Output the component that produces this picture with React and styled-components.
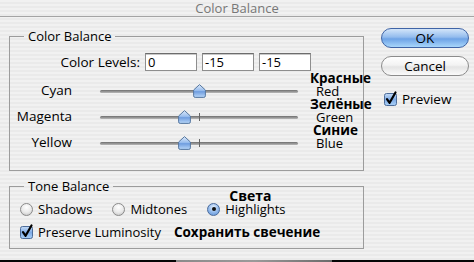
import React from "react";
import styled, { createGlobalStyle } from "styled-components";

const GlobalStyle = createGlobalStyle`
  html, body { margin: 0; padding: 0; }
  body { font-family: "Open Sans", "DejaVu Sans", sans-serif; }
`;

const Window = styled.div`
  width: 474px;
  height: 262px;
  overflow: hidden;
  display: flex;
  flex-direction: column;
  color: #000;
  font-size: 13px;
  background: repeating-linear-gradient(to bottom, #f1f1f1 0 2px, #eaeaea 2px 4px);
`;

const TitleBar = styled.div`
  height: 16px;
  flex: none;
  border-bottom: 1px solid #a4a4a4;
  text-align: center;
  line-height: 16px;
  font-size: 13px;
  color: #777;
`;

const Body = styled.div`
  flex: 1;
  display: flex;
  padding-left: 9px;
`;

const LeftColumn = styled.div`
  width: 355px;
  display: flex;
  flex-direction: column;
`;

const Group = styled.fieldset`
  margin: ${(p) => p.$top}px 0 0 0;
  padding: 0 0 ${(p) => p.$bottom}px 0;
  border: 1px solid #9c9c9c;
  min-width: 0;
`;

const Legend = styled.legend`
  margin-left: 14px;
  padding: 0 4px;
  line-height: 16px;
  font-size: 13px;
`;

const LevelsRow = styled.div`
  display: flex;
  align-items: center;
  gap: 5px;
  margin: 9px 0 1px 0;
`;

const LevelsLabel = styled.span`
  width: 130px;
  text-align: right;
  font-size: 13.5px;
`;

const LevelInput = styled.div`
  width: 48px;
  height: 16px;
  background: #fff;
  border: 1px solid #8e8e8e;
  border-top-color: #6c6c6c;
  box-shadow: inset 0 1px 0 #c8c8c8;
  line-height: 16px;
  padding-left: 2px;
  box-sizing: content-box;
  font-size: 13px;
`;

const SliderRow = styled.div`
  display: grid;
  grid-template-columns: 62px 226px auto;
  height: 26px;
  align-items: end;
`;

const SliderLabel = styled.span`
  text-align: right;
  line-height: 13px;
  margin-bottom: 1px;
  font-size: 13.5px;
`;

const TrackArea = styled.div`
  position: relative;
  height: 14px;
  margin-left: 28px;
  width: 198px;
`;

const Track = styled.div`
  position: absolute;
  left: 0;
  right: 0;
  top: 6px;
  height: 3px;
  border-radius: 2px;
  background: linear-gradient(to bottom, #6e6e6e, #b9b9b9);
`;

const Tick = styled.div`
  position: absolute;
  left: 99px;
  top: 3px;
  width: 1px;
  height: 8px;
  background: #666;
`;

const Thumb = styled.svg`
  position: absolute;
  top: 0;
  width: 13px;
  height: 14px;
  margin-left: -6px;
`;

const SideLabels = styled.div`
  display: flex;
  flex-direction: column;
  margin-left: 12px;
  white-space: nowrap;
`;

const RuLabel = styled.span`
  font-weight: 700;
  font-size: 13.5px;
  line-height: 13px;
  padding-left: ${(p) => p.$indent || 0}px;
`;

const EnLabel = styled.span`
  line-height: 13px;
  padding-left: 6px;
`;

const OptionRow = styled.div`
  display: flex;
  align-items: center;
  height: 16px;
  margin-top: 7px;
  padding-left: 10px;
  gap: ${(p) => p.$gap}px;
`;

const Option = styled.label`
  position: relative;
  display: flex;
  align-items: center;
  gap: 5px;
  white-space: nowrap;
`;

const Annotation = styled.span`
  position: absolute;
  left: 22px;
  bottom: 15px;
  font-weight: 700;
  font-size: 14px;
  line-height: 14px;
`;

const RuNote = styled.span`
  font-weight: 700;
  font-size: 13.5px;
  white-space: nowrap;
`;

const RadioDot = styled.span`
  width: 11px;
  height: 11px;
  border-radius: 50%;
  flex: none;
  display: flex;
  align-items: center;
  justify-content: center;
  border: 1px solid ${(p) => (p.$on ? "#4a6b9c" : "#8a8a8a")};
  background: ${(p) =>
    p.$on
      ? "radial-gradient(circle at 50% 30%, #e6f0fc 0%, #8fb7ea 55%, #5b8fd6 100%)"
      : "radial-gradient(circle at 50% 30%, #ffffff 0%, #e8e8e8 55%, #bdbdbd 100%)"};

  &::after {
    content: "";
    display: ${(p) => (p.$on ? "block" : "none")};
    width: 4px;
    height: 4px;
    border-radius: 50%;
    background: #111;
  }
`;

const RightColumn = styled.div`
  width: 88px;
  margin-left: 17px;
  margin-top: 11px;
  display: flex;
  flex-direction: column;
`;

const Button = styled.button`
  height: 20px;
  width: 88px;
  padding: 0;
  margin-bottom: 8px;
  border-radius: 10px;
  font-family: inherit;
  font-size: 13.5px;
  line-height: 18px;
  color: #000;
  border: 1px solid ${(p) => (p.$primary ? "#3f64a6" : "#8c8c8c")};
  background: ${(p) =>
    p.$primary
      ? "linear-gradient(to bottom, #d3e5f9 0%, #93bcee 45%, #6ea3e6 55%, #a8d6fb 100%)"
      : "linear-gradient(to bottom, #ffffff 0%, #f3f3f3 45%, #e4e4e4 55%, #fbfbfb 100%)"};
`;

const PreviewRow = styled.label`
  display: flex;
  align-items: center;
  gap: 5px;
  height: 16px;
  margin-top: 7px;
  padding-left: 3px;
  font-size: 13.5px;
`;

const BottomStrip = styled.div`
  height: 2px;
  flex: none;
  margin-top: auto;
  background: #050505;
  display: flex;
`;

const StripSegment = styled.div`
  margin-left: 176px;
  width: 156px;
  background: linear-gradient(to right, #8a8a8a, #9a9a9a, #6a6a6a);
`;

const CheckBox = () => (
  <svg width="13" height="13" viewBox="0 0 13 13" style={{ flex: "none", overflow: "visible" }}>
    <defs>
      <linearGradient id="cbg" x1="0" y1="0" x2="0" y2="1">
        <stop offset="0" stopColor="#c6dcf6" />
        <stop offset="0.5" stopColor="#7fabe6" />
        <stop offset="1" stopColor="#a9d0f7" />
      </linearGradient>
    </defs>
    <rect x="0.5" y="0.5" width="12" height="12" rx="2" fill="url(#cbg)" stroke="#4d6c99" />
    <path d="M3 6.2 L5.6 9.8 L11.5 -0.5" fill="none" stroke="#000" strokeWidth="2.2" strokeLinecap="round" strokeLinejoin="round" />
  </svg>
);

const ThumbIcon = ({ pos }) => (
  <Thumb viewBox="0 0 13 14" style={{ left: `${pos * 100}%` }}>
    <defs>
      <linearGradient id="thg" x1="0" y1="0" x2="0" y2="1">
        <stop offset="0" stopColor="#dce8f8" />
        <stop offset="0.45" stopColor="#9bbfee" />
        <stop offset="0.55" stopColor="#6f9ddf" />
        <stop offset="1" stopColor="#b9d7f8" />
      </linearGradient>
    </defs>
    <path
      d="M6.5 0.6 L12.4 6 L12.4 11.8 Q12.4 13.4 10.8 13.4 L2.2 13.4 Q0.6 13.4 0.6 11.8 L0.6 6 Z"
      fill="url(#thg)"
      stroke="#56779f"
      strokeWidth="1"
    />
  </Thumb>
);

const sliders = [
  { left: "Cyan", ru: "Красные", en: "Red", value: 0, tick: false, indent: 0 },
  { left: "Magenta", ru: "Зелёные", en: "Green", value: -15, tick: true, indent: 0 },
  { left: "Yellow", ru: "Синие", en: "Blue", value: -15, tick: true, indent: 3 },
];

const levels = ["0", "-15", "-15"];

export default function App() {
  return (
    <>
      <GlobalStyle />
      <Window>
        <TitleBar>Color Balance</TitleBar>
        <Body>
          <LeftColumn>
            <Group $top={11} $bottom={20}>
              <Legend>Color Balance</Legend>
              <LevelsRow>
                <LevelsLabel>Color Levels:</LevelsLabel>
                {levels.map((v, i) => (
                  <LevelInput key={i}>{v}</LevelInput>
                ))}
              </LevelsRow>
              {sliders.map((s) => (
                <SliderRow key={s.left}>
                  <SliderLabel>{s.left}</SliderLabel>
                  <TrackArea>
                    <Track />
                    {s.tick && <Tick />}
                    <ThumbIcon pos={(s.value + 100) / 200} />
                  </TrackArea>
                  <SideLabels>
                    <RuLabel $indent={s.indent}>{s.ru}</RuLabel>
                    <EnLabel>{s.en}</EnLabel>
                  </SideLabels>
                </SliderRow>
              ))}
            </Group>
            <Group $top={7} $bottom={8}>
              <Legend>Tone Balance</Legend>
              <OptionRow $gap={20}>
                <Option>
                  <RadioDot />
                  Shadows
                </Option>
                <Option>
                  <RadioDot />
                  Midtones
                </Option>
                <Option>
                  <RadioDot $on />
                  Highlights
                  <Annotation>Света</Annotation>
                </Option>
              </OptionRow>
              <OptionRow $gap={13}>
                <Option>
                  <CheckBox />
                  Preserve Luminosity
                </Option>
                <RuNote>Сохранить свечение</RuNote>
              </OptionRow>
            </Group>
          </LeftColumn>
          <RightColumn>
            <Button $primary>OK</Button>
            <Button>Cancel</Button>
            <PreviewRow>
              <CheckBox />
              Preview
            </PreviewRow>
          </RightColumn>
        </Body>
        <BottomStrip>
          <StripSegment />
        </BottomStrip>
      </Window>
    </>
  );
}
